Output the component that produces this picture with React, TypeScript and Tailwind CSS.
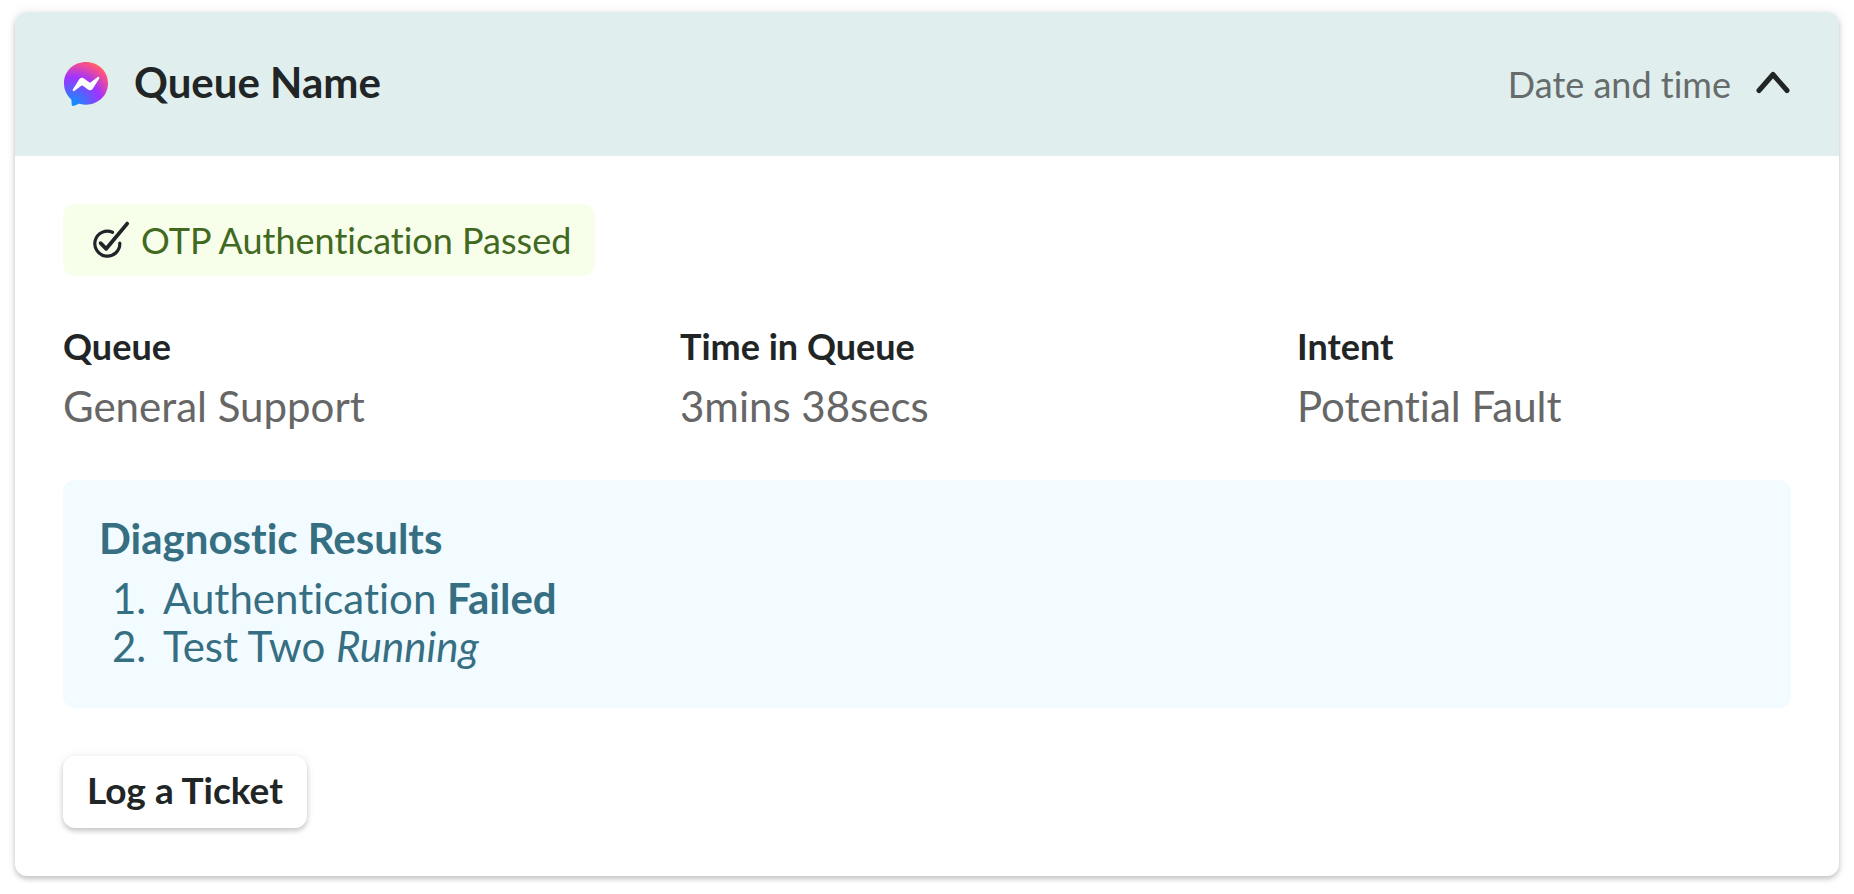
import { useState } from 'react'

interface Detail {
  label: string
  value: string
}

const DETAILS: Detail[] = [
  { label: 'Queue', value: 'General Support' },
  { label: 'Time in Queue', value: '3mins 38secs' },
  { label: 'Intent', value: 'Potential Fault' },
]

function MessengerIcon() {
  return (
    <svg viewBox="0 0 800 800" className="w-11 h-11 shrink-0" aria-hidden="true">
      <defs>
        <radialGradient id="messenger" gradientUnits="userSpaceOnUse" cx="154" cy="800" r="880">
          <stop offset="0" stopColor="#0099ff" />
          <stop offset="0.6" stopColor="#a033ff" />
          <stop offset="0.93" stopColor="#ff5280" />
          <stop offset="1" stopColor="#ff7061" />
        </radialGradient>
      </defs>
      <path
        fill="url(#messenger)"
        d="M400 0C174.7 0 0 165.1 0 388c0 116.6 47.8 217.4 125.6 287 6.5 5.8 10.5 14 10.7 22.8l2.2 71.2a32 32 0 0 0 44.9 28.3l79.4-35c6.7-3 14.3-3.5 21.4-1.6 36.5 10 75.3 15.4 115.8 15.4 225.3 0 400-165.1 400-388S625.3 0 400 0z"
      />
      <path
        fill="#fff"
        d="M159.8 501.5l117.5-186.4a60 60 0 0 1 86.8-16l93.5 70.1a24 24 0 0 0 28.9-.1l126.2-95.8c16.8-12.8 38.8 7.4 27.6 25.3L522.7 485a60 60 0 0 1-86.8 16l-93.5-70.1a24 24 0 0 0-28.9.1l-126.2 95.8c-16.8 12.8-38.8-7.3-27.5-25.3z"
      />
    </svg>
  )
}

function PassedIcon() {
  return (
    <svg
      viewBox="0 0 48 48"
      className="w-12 h-12 shrink-0"
      fill="none"
      stroke="#212529"
      strokeLinecap="round"
      strokeLinejoin="round"
      aria-hidden="true"
    >
      <path strokeWidth="3.2" d="M25.5 16.3A12.5 12.5 0 1 0 32.8 27" />
      <path strokeWidth="3.8" d="M13.6 27.2L19.2 32.8L40.2 7.6" />
    </svg>
  )
}

export default function App() {
  const [open, setOpen] = useState(true)

  return (
    <main className="px-[15px] pt-3 pb-4 bg-white font-['Lato',sans-serif] text-[#212526] [font-variant-ligatures:none]">
      <section className="rounded-xl overflow-hidden bg-white shadow-[0_3px_5px_rgba(0,0,0,0.2),0_0_12px_rgba(0,0,0,0.08)]">
        <header className="flex items-center justify-between pl-[49px] pr-12 py-12 bg-[#e0efee]">
          <div className="flex items-center gap-[26px]">
            <MessengerIcon />
            <h1 className="pb-1 text-[42px] leading-[44px] font-bold">Queue Name</h1>
          </div>
          <div className="flex items-center gap-6">
            <span className="text-[36px] leading-[48px] text-[#666c6c]">Date and time</span>
            <button
              type="button"
              aria-label="Toggle details"
              aria-expanded={open}
              onClick={() => setOpen(!open)}
              className="cursor-pointer"
            >
              <svg
                viewBox="0 0 36 36"
                className={`w-9 h-9 ${open ? '' : 'rotate-180'}`}
                fill="none"
                stroke="currentColor"
                strokeWidth="5"
                strokeLinecap="round"
                strokeLinejoin="round"
              >
                <path d="M4 24.5L18 8.5L32 24.5" />
              </svg>
            </button>
          </div>
        </header>

        {open && (
          <div className="flex flex-col items-start gap-12 p-12">
            <div className="flex items-center gap-[6px] px-6 py-3 rounded-xl bg-[#f7ffeb] text-[#41691f]">
              <PassedIcon />
              <span className="text-[36px] leading-[48px]">OTP Authentication Passed</span>
            </div>

            <dl className="grid grid-cols-3 gap-[123px] w-full pb-1">
              {DETAILS.map((detail) => (
                <div key={detail.label} className="flex flex-col gap-4">
                  <dt className="text-[36px] leading-[44px] font-bold">{detail.label}</dt>
                  <dd className="text-[42px] leading-[44px] text-[#666666]">{detail.value}</dd>
                </div>
              ))}
            </dl>

            {/* Diagnostics */}
            <div className="w-full px-9 pt-[34px] pb-[38px] rounded-xl bg-[#f2fbff] text-[#366e82] text-[42px] leading-[48px]">
              <h2 className="font-bold mb-3">Diagnostic Results</h2>
              <ol className="list-decimal pl-[58px]">
                <li className="pl-[6px]">
                  Authentication <strong className="font-bold">Failed</strong>
                </li>
                <li className="pl-[6px]">
                  Test Two <em>Running</em>
                </li>
              </ol>
            </div>

            <button
              type="button"
              className="px-6 pt-[10px] pb-[14px] rounded-xl bg-white text-[37px] leading-[48px] font-bold cursor-pointer shadow-[0_3px_5px_rgba(0,0,0,0.2),0_0_12px_rgba(0,0,0,0.06)]"
            >
              Log a Ticket
            </button>
          </div>
        )}
      </section>
    </main>
  )
}
